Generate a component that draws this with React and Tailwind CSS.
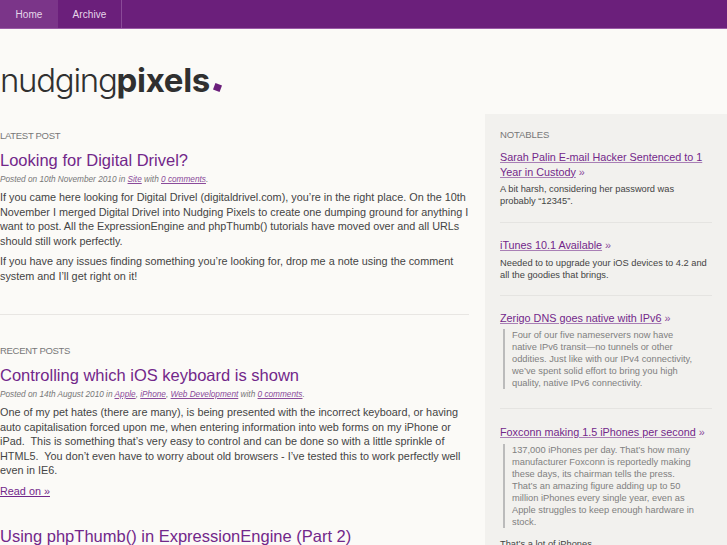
import React from "react";

const notables = [
  {
    title: "Sarah Palin E-mail Hacker Sentenced to 1 Year in Custody",
    text: "A bit harsh, considering her password was probably “12345”.",
    spacing: "pb-[15px] mb-[15px]",
  },
  {
    title: "iTunes 10.1 Available",
    text: "Needed to to upgrade your iOS devices to 4.2 and all the goodies that brings.",
    spacing: "pb-[14px] mb-[15px]",
  },
  {
    title: "Zerigo DNS goes native with IPv6",
    quote:
      "Four of our five nameservers now have native IPv6 transit—no tunnels or other oddities. Just like with our IPv4 connectivity, we’ve spent solid effort to bring you high quality, native IPv6 connectivity.",
    spacing: "pb-[19px] mb-[16px]",
  },
  {
    title: "Foxconn making 1.5 iPhones per second",
    quote:
      "137,000 iPhones per day. That’s how many manufacturer Foxconn is reportedly making these days, its chairman tells the press. That’s an amazing figure adding up to 50 million iPhones every single year, even as Apple struggles to keep enough hardware in stock.",
    text: "That’s a lot of iPhones.",
    spacing: "",
  },
];

const Meta = ({ date, cats }) => (
  <p className="mt-[3px] text-[8.25px] leading-[12px] italic text-[#777]">
    Posted on {date} in{" "}
    {cats.map((cat, i) => (
      <span key={cat}>
        <a className="text-[#8a4a9a] underline">{cat}</a>
        {i < cats.length - 1 ? ", " : ""}
      </span>
    ))}{" "}
    with <a className="text-[#8a4a9a] underline">0 comments</a>.
  </p>
);

const App = () => {
  return (
    <div className="h-[545px] overflow-hidden bg-[#fbfaf7] font-['Liberation_Sans',sans-serif] text-[#444]">
      <nav className="flex h-[29px] bg-[#6b1f7b] border-b border-[#9a5aa6]">
        <a className="flex w-[58px] items-center justify-center bg-[#7b3589] text-[10px] tracking-[0.1px] text-[#e6d6ea]">Home</a>
        <a className="flex w-[64px] items-center justify-center border-r border-[#8a4a98] text-[10px] tracking-[0.1px] text-[#e6d6ea]">Archive</a>
      </nav>

      <div className="h-[85px] pt-[32px]">
        <h1 className="flex items-center text-[33px] leading-[38px] text-[#303030] font-['Inter',sans-serif]">
          <span className="font-light tracking-[-1.3px]">nudging</span>
          <span className="font-bold tracking-[-0.3px]">pixels</span>
          <span className="ml-[4px] mt-[15px] h-[7px] w-[7px] rotate-[20deg] bg-[#6b1f7b]"></span>
        </h1>
      </div>

      <div className="flex">
        <main className="w-[469px] shrink-0 pt-[16px]">
          <h2 className="text-[9.5px] leading-[12px] tracking-[-0.3px] uppercase text-[#777]">Latest Post</h2>
          <h3 className="mt-[7px] text-[16.5px] leading-[22px] text-[#72278a]">Looking for Digital Drivel?</h3>
          <Meta date="10th November 2010" cats={["Site"]} />
          <p className="mt-[4px] text-[10.83px] leading-[14.5px] whitespace-pre">
            {"If you came here looking for Digital Drivel (digitaldrivel.com), you’re in the right place. On the 10th\nNovember I merged Digital Drivel into Nudging Pixels to create one dumping ground for anything I\nwant to post. All the ExpressionEngine and phpThumb() tutorials have moved over and all URLs\nshould still work perfectly."}
          </p>
          <p className="mt-[6px] text-[10.83px] leading-[14.5px] whitespace-pre">
            {"If you have any issues finding something you’re looking for, drop me a note using the comment\nsystem and I’ll get right on it!"}
          </p>
          <hr className="mt-[31px] border-[#e8e6e3]" />

          <h2 className="mt-[30px] text-[9.5px] leading-[12px] tracking-[-0.3px] uppercase text-[#777]">Recent Posts</h2>
          <h3 className="mt-[7px] text-[16.5px] leading-[22px] text-[#72278a]">Controlling which iOS keyboard is shown</h3>
          <Meta date="14th August 2010" cats={["Apple", "iPhone", "Web Development"]} />
          <p className="mt-[4px] text-[10.83px] leading-[14.5px] whitespace-pre">
            {"One of my pet hates (there are many), is being presented with the incorrect keyboard, or having\nauto capitalisation forced upon me, when entering information into web forms on my iPhone or\niPad.  This is something that’s very easy to control and can be done so with a little sprinkle of\nHTML5.  You don’t even have to worry about old browsers - I’ve tested this to work perfectly well\neven in IE6."}
          </p>
          <p className="mt-[6px] text-[10.83px] leading-[14.5px]">
            <a className="text-[#72278a] underline">Read on »</a>
          </p>
          <h3 className="mt-[27px] text-[16.5px] leading-[22px] text-[#72278a]">Using phpThumb() in ExpressionEngine (Part 2)</h3>
        </main>

        <aside className="ml-[16px] flex-1 bg-[#f2f1ee] px-[15px] pt-[15px]">
          <h2 className="text-[9.5px] leading-[12px] tracking-[-0.1px] uppercase text-[#777]">Notables</h2>
          {notables.map((note, i) => (
            <div key={note.title} className={note.spacing ? `border-b border-[#e5e4e1] ${note.spacing}` : ""}>
              <h4 className={`text-[10.8px] leading-[14.5px] text-[#8a4a9a] ${i === 0 ? "mt-[9px]" : ""}`}>
                <a className="text-[#72278a] underline decoration-[#a97fb5]">{note.title}</a> »
              </h4>
              {note.quote && (
                <blockquote className="mt-[4px] ml-[3px] mr-[15px] border-l-2 border-[#bbb] pl-[7px] text-[9.3px] leading-[12px] text-[#808080]">
                  {note.quote}
                </blockquote>
              )}
              {note.text && (
                <p className={`${note.quote ? "mt-[10px]" : "mt-[4px]"} text-[9.3px] leading-[12px] text-[#444]`}>
                  {note.text}
                </p>
              )}
            </div>
          ))}
        </aside>
      </div>
    </div>
  );
};

export default App;
